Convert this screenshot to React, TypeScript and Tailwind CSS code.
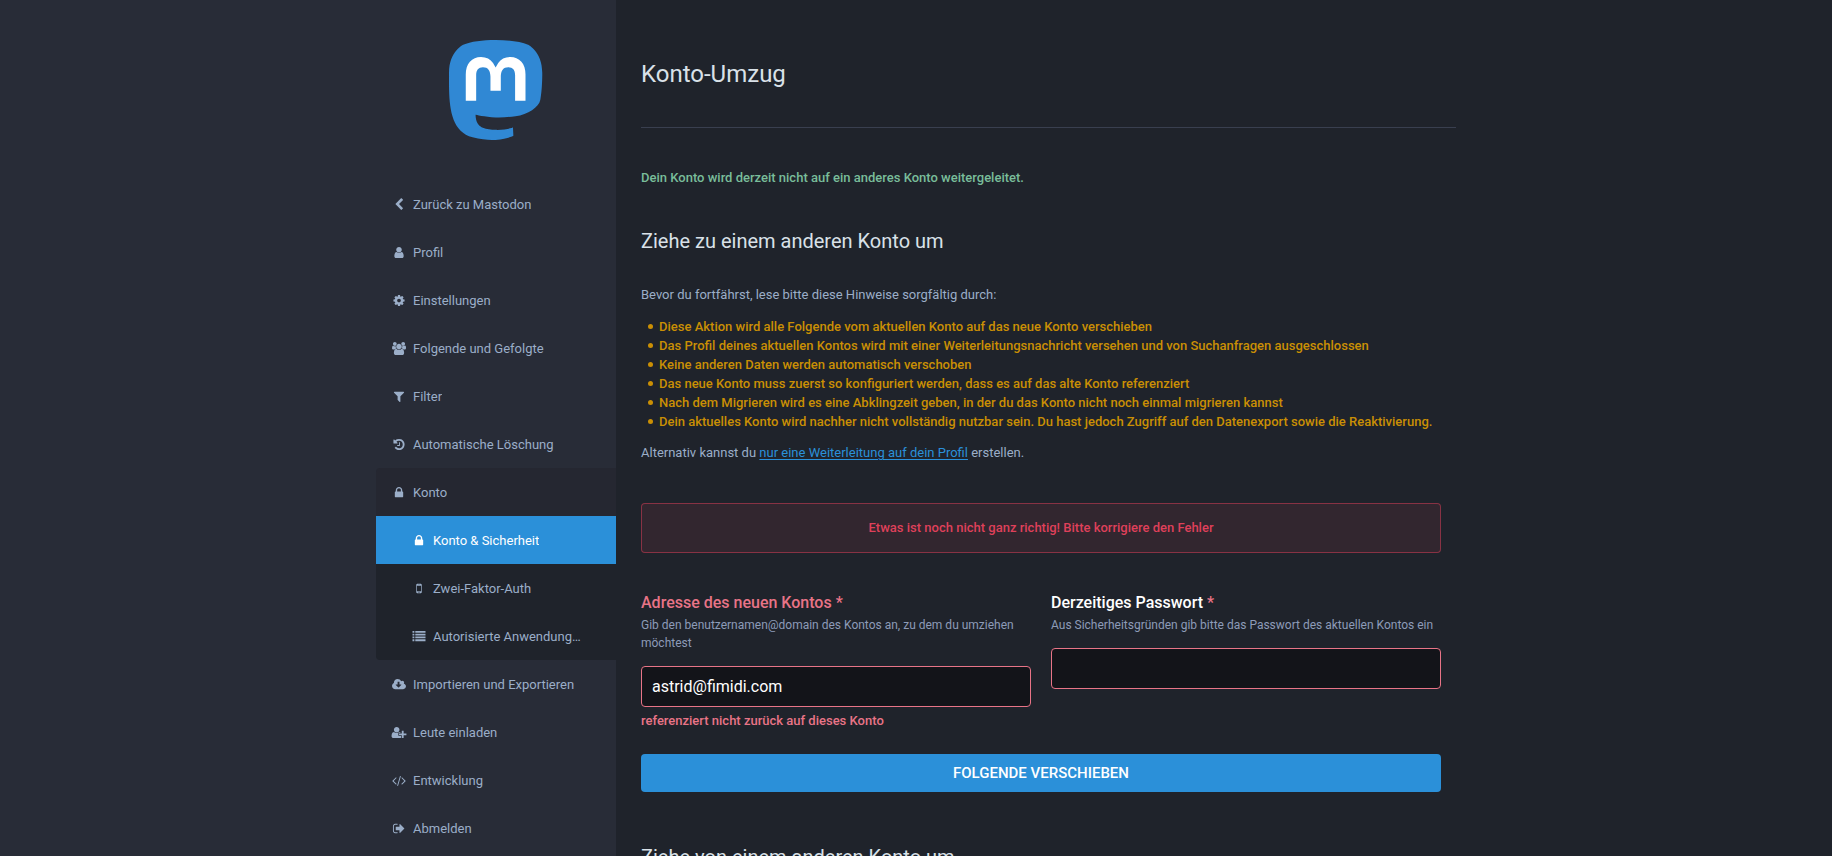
import React from "react";

type Glyph = { box: string; d: string };

const glyphs: Record<string, Glyph> = {
  back: {
    box: "0 0 1792 1792",
    d: "M1427 301l-531 531 531 531q19 19 19 45t-19 45l-166 166q-19 19-45 19t-45-19l-742-742q-19-19-19-45t19-45l742-742q19-19 45-19t45 19l166 166q19 19 19 45t-19 45z",
  },
  user: {
    box: "0 0 1792 1792",
    d: "M1536 1399q0 109-62.5 187t-150.5 78h-854q-88 0-150.5-78t-62.5-187q0-85 8.5-160.5t31.5-152 58.5-131 94-89 134.5-34.5q131 128 313 128t313-128q76 0 134.5 34.5t94 89 58.5 131 31.5 152 8.5 160.5zm-256-887q0 159-112.5 271.5t-271.5 112.5-271.5-112.5-112.5-271.5 112.5-271.5 271.5-112.5 271.5 112.5 112.5 271.5z",
  },
  cog: {
    box: "0 0 1792 1792",
    d: "M1152 896q0-106-75-181t-181-75-181 75-75 181 75 181 181 75 181-75 75-181zm512-109v222q0 12-8 23t-20 13l-185 28q-19 54-39 91 35 50 107 138 10 12 10 25t-9 23q-27 37-99 108t-94 71q-12 0-26-9l-138-108q-44 23-91 38-16 136-29 186-7 28-36 28h-222q-14 0-24.5-8.5t-11.5-21.5l-28-184q-49-16-90-37l-141 107q-10 9-25 9-14 0-25-11-126-114-165-168-7-10-7-23 0-12 8-23 15-21 51-66.5t54-70.5q-27-50-41-99l-183-27q-13-2-21-12.5t-8-23.5v-222q0-12 8-23t19-13l186-28q14-46 39-92-40-57-107-138-10-12-10-24 0-10 9-23 26-36 98.5-107.5t94.5-71.5q13 0 26 10l138 107q44-23 91-38 16-136 29-186 7-28 36-28h222q14 0 24.5 8.5t11.5 21.5l28 184q49 16 90 37l142-107q9-9 24-9 13 0 25 10 129 119 165 170 7 8 7 22 0 12-8 23-15 21-51 66.5t-54 70.5q26 50 41 98l183 28q13 2 21 12.5t8 23.5z",
  },
  users: {
    box: "-64 0 1920 1792",
    d: "M529 896q-162 5-265 128h-134q-82 0-138-40.5t-56-118.5q0-353 124-353 6 0 43.5 21t97.5 42.5 119 21.5q67 0 133-23-5 37-5 66 0 159 93 295zm1071 637q0 120-73 189.5t-194 69.5h-874q-121 0-194-69.5t-73-189.5q0-53 3.5-103.5t14-109 26.5-108.5 43-97.5 62-81 85.5-53.5 111.5-20q10 0 43 21.5t73 48 107 48 135 21.5 135-21.5 107-48 73-48 43-21.5q61 0 111.5 20t85.5 53.5 62 81 43 97.5 26.5 108.5 14 109 3.5 103.5zm-1024-1277q0 106-75 181t-181 75-181-75-75-181 75-181 181-75 181 75 75 181zm704 384q0 159-112.5 271.5t-271.5 112.5-271.5-112.5-112.5-271.5 112.5-271.5 271.5-112.5 271.5 112.5 112.5 271.5zm576 225q0 78-56 118.5t-138 40.5h-134q-103-123-265-128 93-136 93-295 0-29-5-66 66 23 133 23 59 0 119-21.5t97.5-42.5 43.5-21q124 0 124 353zm-128-609q0 106-75 181t-181 75-181-75-75-181 75-181 181-75 181 75 75 181z",
  },
  filter: {
    box: "0 0 1792 1792",
    d: "M1595 295q17 41-14 70l-493 493v742q0 42-39 59-13 5-25 5-27 0-45-19l-256-256q-19-19-19-45v-486l-493-493q-31-29-14-70 17-39 59-39h1280q42 0 59 39z",
  },
  history: {
    box: "0 0 1792 1792",
    d: "M1664 896q0 156-61 298t-164 245-245 164-298 61q-172 0-327-72.5t-264-204.5q-7-10-6.5-22.5t8.5-20.5l137-138q10-9 25-9 16 2 23 12 73 95 179 147t225 52q104 0 198.5-40.5t163.5-109.5 109.5-163.5 40.5-198.5-40.5-198.5-109.5-163.5-163.5-109.5-198.5-40.5q-98 0-188 35.5t-160 101.5l137 138q31 30 14 69-17 40-59 40h-448q-26 0-45-19t-19-45v-448q0-42 40-59 39-17 69 14l130 129q107-101 244.5-156.5t284.5-55.5q156 0 298 61t245 164 164 245 61 298zm-640-288v448q0 14-9 23t-23 9h-320q-14 0-23-9t-9-23v-64q0-14 9-23t23-9h224v-352q0-14 9-23t23-9h64q14 0 23 9t9 23z",
  },
  lock: {
    box: "0 0 1792 1792",
    d: "M640 768h512v-192q0-106-75-181t-181-75-181 75-75 181v192zm832 96v576q0 40-28 68t-68 28h-960q-40 0-68-28t-28-68v-576q0-40 28-68t68-28h32v-192q0-184 132-316t316-132 316 132 132 316v192h32q40 0 68 28t28 68z",
  },
  mobile: {
    box: "0 0 1792 1792",
    d: "M976 1408q0-33-23.5-56.5t-56.5-23.5-56.5 23.5-23.5 56.5 23.5 56.5 56.5 23.5 56.5-23.5 23.5-56.5zm208-160v-704q0-13-9.5-22.5t-22.5-9.5h-512q-13 0-22.5 9.5t-9.5 22.5v704q0 13 9.5 22.5t22.5 9.5h512q13 0 22.5-9.5t9.5-22.5zm-192-848q0-16-16-16h-160q-16 0-16 16t16 16h160q16 0 16-16zm288-16v1024q0 52-38 90t-90 38h-512q-52 0-90-38t-38-90v-1024q0-52 38-90t90-38h512q52 0 90 38t38 90z",
  },
  list: {
    box: "0 0 1792 1792",
    d: "M0 128h256v256h-256zM384 128h1408v256h-1408zM0 512h256v256h-256zM384 512h1408v256h-1408zM0 896h256v256h-256zM384 896h1408v256h-1408zM0 1280h256v256h-256zM384 1280h1408v256h-1408z",
  },
  cloud: {
    box: "-64 0 1920 1792",
    d: "M1216 928q0-14-9-23t-23-9h-224v-352q0-13-9.5-22.5t-22.5-9.5h-192q-13 0-22.5 9.5t-9.5 22.5v352h-224q-13 0-22.5 9.5t-9.5 22.5q0 14 9 23l352 352q9 9 23 9t23-9l351-351q10-12 10-24zm640 224q0 159-112.5 271.5t-271.5 112.5h-1088q-185 0-316.5-131.5t-131.5-316.5q0-130 70-240t188-165q-2-30-2-43 0-212 150-362t362-150q156 0 285.5 87t188.5 231q71-62 166-62 106 0 181 75t75 181q0 76-41 138 130 31 213.5 135.5t83.5 238.5z",
  },
  invite: {
    box: "0 0 2048 1792",
    d: "M704 896q-159 0-271.5-112.5t-112.5-271.5 112.5-271.5 271.5-112.5 271.5 112.5 112.5 271.5-112.5 271.5-271.5 112.5zm960 128h352q13 0 22.5 9.5t9.5 22.5v192q0 13-9.5 22.5t-22.5 9.5h-352v352q0 13-9.5 22.5t-22.5 9.5h-192q-13 0-22.5-9.5t-9.5-22.5v-352h-352q-13 0-22.5-9.5t-9.5-22.5v-192q0-13 9.5-22.5t22.5-9.5h352v-352q0-13 9.5-22.5t22.5-9.5h192q13 0 22.5 9.5t9.5 22.5v352zm-736 224q0 52 38 90t90 38h256v238q-68 50-171 50h-874q-121 0-194-69t-73-190q0-53 3.5-103.5t14-109 26.5-108.5 43-97.5 62-81 85.5-53.5 111.5-20q19 0 39 17 79 61 154.5 91.5t164.5 30.5 164.5-30.5 154.5-91.5q20-17 39-17 132 0 217 96h-223q-52 0-90 38t-38 90v192z",
  },
  code: {
    box: "-64 0 1920 1792",
    d: "M553 1399l-50 50q-10 10-23 10t-23-10l-466-466q-10-10-10-23t10-23l466-466q10-10 23-10t23 10l50 50q10 10 10 23t-10 23l-393 393 393 393q10 10 10 23t-10 23zm591-1067l-373 1291q-4 13-15.5 19.5t-23.5 2.5l-62-17q-13-4-19.5-15.5t-2.5-24.5l373-1291q4-13 15.5-19.5t23.5-2.5l62 17q13 4 19.5 15.5t2.5 24.5zm657 651l-466 466q-10 10-23 10t-23-10l-50-50q-10-10-10-23t10-23l393-393-393-393q-10-10-10-23t10-23l50-50q10-10 23-10t23 10l466 466q10 10 10 23t-10 23z",
  },
  logout: {
    box: "0 0 1792 1792",
    d: "M704 1440q0 4 1 20t.5 26.5-3 23.5-10 19.5-20.5 6.5h-320q-119 0-203.5-84.5t-84.5-203.5v-704q0-119 84.5-203.5t203.5-84.5h320q13 0 22.5 9.5t9.5 22.5q0 4 1 20t.5 26.5-3 23.5-10 19.5-20.5 6.5h-320q-66 0-113 47t-47 113v704q0 66 47 113t113 47h312l11.5 1 11.5 3 8 5.5 7 9 2 13.5zm928-544q0 26-19 45l-544 544q-19 19-45 19t-45-19-19-45v-288h-448q-26 0-45-19t-19-45v-384q0-26 19-45t45-19h448v-288q0-26 19-45t45-19 45 19l544 544q19 19 19 45z",
  },
};

function Icon({ name }: { name: string }) {
  return (
    <svg viewBox={glyphs[name].box} className="h-[13px] w-4 shrink-0 fill-current" aria-hidden="true">
      <path d={glyphs[name].d} />
    </svg>
  );
}

function Logo() {
  return (
    <svg viewBox="0 0 216.4144 232.00976" className="h-[100px]" role="img" aria-label="Mastodon">
      <path
        fill="#3088d4"
        d="M211.80734 139.0875c-3.18125 16.36625-28.4925 34.2775-57.5625 37.74875-15.15875 1.80875-30.08375 3.47125-45.99875 2.74125-26.0275-1.1925-46.565-6.2125-46.565-6.2125 0 2.53375.15625 4.94625.46875 7.2025 3.38375 25.68625 25.47 27.225 46.39125 27.9425 21.11625.7225 39.91875-5.20625 39.91875-5.20625l.8675 19.09s-14.77 7.93125-41.08125 9.39c-14.50875.7975-32.52375-.365-53.50625-5.91875C9.23234 213.82 1.40609 165.31125.20859 116.09125c-.365-14.61375-.14-28.39375-.14-39.91875 0-50.33 32.97625-65.0825 32.97625-65.0825C49.67234 3.45375 78.20359.2425 107.86484 0h.72875c29.66125.2425 58.21125 3.45375 74.8375 11.09 0 0 32.975 14.7525 32.975 65.0825 0 0 .41375 37.13375-4.59875 62.915"
      />
      <path
        fill="#fff"
        d="M177.50984 80.077v60.94125h-24.14375v-59.15c0-12.46875-5.24625-18.7975-15.74-18.7975-11.6025 0-17.4175 7.5075-17.4175 22.3525v32.37625H96.20734V85.42325c0-14.845-5.81625-22.3525-17.41875-22.3525-10.49375 0-15.74 6.32875-15.74 18.7975v59.15H38.90484V80.077c0-12.455 3.17125-22.3525 9.54125-29.675 6.56875-7.3225 15.17125-11.07625 25.85-11.07625 12.355 0 21.71125 4.74875 27.8975 14.2475l6.01375 10.08125 6.015-10.08125c6.185-9.49875 15.54125-14.2475 27.8975-14.2475 10.6775 0 19.28 3.75375 25.85 11.07625 6.36875 7.3225 9.54 17.22 9.54 29.675"
      />
    </svg>
  );
}

function NavLink({ icon, label, tone = "px-[15px]" }: { icon: string; label: string; tone?: string }) {
  return (
    <a href="#" className={`flex h-12 items-center gap-1.5 ${tone}`}>
      <Icon name={icon} />
      <span className="truncate pt-0.5">{label}</span>
    </a>
  );
}

const topLinks = [
  ["back", "Zurück zu Mastodon"],
  ["user", "Profil"],
  ["cog", "Einstellungen"],
  ["users", "Folgende und Gefolgte"],
  ["filter", "Filter"],
  ["history", "Automatische Löschung"],
];

const bottomLinks = [
  ["cloud", "Importieren und Exportieren"],
  ["invite", "Leute einladen"],
  ["code", "Entwicklung"],
  ["logout", "Abmelden"],
];

const warnings = [
  "Diese Aktion wird alle Folgende vom aktuellen Konto auf das neue Konto verschieben",
  "Das Profil deines aktuellen Kontos wird mit einer Weiterleitungsnachricht versehen und von Suchanfragen ausgeschlossen",
  "Keine anderen Daten werden automatisch verschoben",
  "Das neue Konto muss zuerst so konfiguriert werden, dass es auf das alte Konto referenziert",
  "Nach dem Migrieren wird es eine Abklingzeit geben, in der du das Konto nicht noch einmal migrieren kannst",
  "Dein aktuelles Konto wird nachher nicht vollständig nutzbar sein. Du hast jedoch Zugriff auf den Datenexport sowie die Reaktivierung.",
];

const inputStyle =
  "block h-[41px] w-full rounded border border-[#e87487] bg-[#131419] px-2.5 text-base text-white outline-none";

export default function App() {
  return (
    <div className="flex h-screen overflow-hidden bg-[#1f232b] font-[Roboto,sans-serif] text-[13px] leading-[18px] text-[#9baec8]">
      <aside className="flex flex-[1_1_240px] justify-end overflow-hidden bg-[#282c37]">
        <div className="w-60">
          <a href="#" className="my-10 flex justify-center">
            <Logo />
          </a>
          <nav>
            <ul>
              {topLinks.map(([icon, label]) => (
                <li key={label}>
                  <NavLink icon={icon} label={label} />
                </li>
              ))}
              <li>
                <NavLink icon="lock" label="Konto" tone="px-[15px] rounded-tl bg-[#252731]" />
                <ul className="overflow-hidden rounded-bl bg-[#1f232b]">
                  <li>
                    <NavLink icon="lock" label="Konto & Sicherheit" tone="px-[35px] bg-[#2b90d9] text-white" />
                  </li>
                  <li>
                    <NavLink icon="mobile" label="Zwei-Faktor-Auth" tone="px-[35px]" />
                  </li>
                  <li>
                    <NavLink icon="list" label="Autorisierte Anwendung…" tone="pl-[35px] pr-[15px]" />
                  </li>
                </ul>
              </li>
              {bottomLinks.map(([icon, label]) => (
                <li key={label}>
                  <NavLink icon={icon} label={label} />
                </li>
              ))}
            </ul>
          </nav>
        </div>
      </aside>

      <main className="flex-[1_1_840px] overflow-y-auto [scrollbar-width:none]">
        <div className="max-w-[840px] pt-14 pb-5 pl-[25px]">
          <h2 className="border-b border-[#393f4f] pb-[35px] text-2xl leading-9 text-[#d9e1e8]">Konto-Umzug</h2>

          <div className="pr-[15px]">
            <p className="mt-[41px] font-medium text-[#79bd9a]">
              Dein Konto wird derzeit nicht auf ein anderes Konto weitergeleitet.
            </p>

            <h3 className="mt-10 text-xl leading-7 text-[#d9e1e8]">Ziehe zu einem anderen Konto um</h3>

            <form onSubmit={(e) => e.preventDefault()}>
              <p className="mt-[31px]">Bevor du fortfährst, lese bitte diese Hinweise sorgfältig durch:</p>
              <ul className="my-[13px] pl-[7px] font-medium leading-[19px] text-[#ca8f04]">
                {warnings.map((text) => (
                  <li
                    key={text}
                    className="flex items-center gap-1.5 before:size-[5px] before:shrink-0 before:rounded-full before:bg-current"
                  >
                    {text}
                  </li>
                ))}
              </ul>
              <p>
                Alternativ kannst du{" "}
                <a href="#" className="text-[#2b90d9] underline underline-offset-2">
                  nur eine Weiterleitung auf dein Profil
                </a>{" "}
                erstellen.
              </p>

              <div
                role="alert"
                className="mt-[41px] rounded border border-[#df405a]/50 bg-[#df405a]/10 p-[15px] text-center font-medium text-[#df405a]"
              >
                Etwas ist noch nicht ganz richtig! Bitte korrigiere den Fehler
              </div>

              <div className="mt-[38px] grid grid-cols-2 gap-5">
                <div>
                  <label htmlFor="acct" className="block text-base font-medium text-[#e87487]">
                    Adresse des neuen Kontos <abbr title="erforderlich" className="no-underline">*</abbr>
                  </label>
                  <p className="mt-px text-xs leading-[18px] text-[#8d9bb8]">
                    Gib den benutzernamen@domain des Kontos an, zu dem du umziehen möchtest
                  </p>
                  <div className="mt-3.5">
                    <input id="acct" type="text" defaultValue="astrid@fimidi.com" className={inputStyle} />
                  </div>
                  <p className="mt-[5px] font-medium text-[#e87487]">referenziert nicht zurück auf dieses Konto</p>
                </div>
                <div>
                  <label htmlFor="password" className="block text-base font-medium text-white">
                    Derzeitiges Passwort <abbr title="erforderlich" className="text-[#e87487] no-underline">*</abbr>
                  </label>
                  <p className="mt-px text-xs leading-[18px] text-[#8d9bb8]">
                    Aus Sicherheitsgründen gib bitte das Passwort des aktuellen Kontos ein
                  </p>
                  <div className="mt-3.5">
                    <input id="password" type="password" className={inputStyle} />
                  </div>
                </div>
              </div>

              <button
                type="submit"
                className="mt-6 block h-[38px] w-full rounded bg-[#2b90d9] text-[15px] font-medium uppercase text-white"
              >
                Folgende verschieben
              </button>
            </form>

            <h3 className="mt-[51px] text-xl leading-7 text-[#d9e1e8]">Ziehe von einem anderen Konto um</h3>
          </div>
        </div>
      </main>
    </div>
  );
}
